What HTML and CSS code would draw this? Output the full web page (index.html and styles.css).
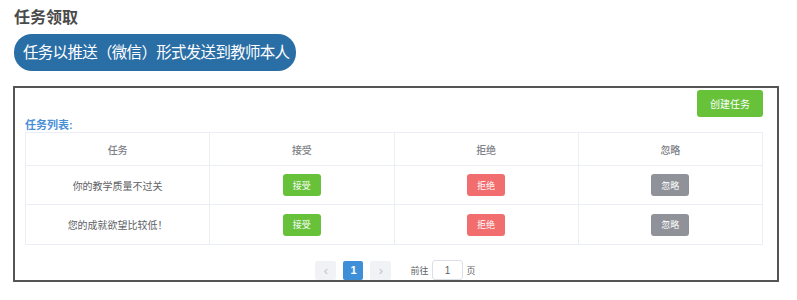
FILE: index.html
```html
<!DOCTYPE html>
<html lang="zh-CN">
<head>
  <meta charset="UTF-8">
  <title>任务领取</title>
  <link rel="stylesheet" href="styles.css">
</head>
<body>

  <div class="page">
    <h2 class="title">任务领取</h2>
    <div class="notice">任务以推送（微信）形式发送到教师本人</div>

    <div class="panel">
      <div class="toolbar">
        <button class="btn btn-create">创建任务</button>
      </div>
      <div class="list-label">任务列表:</div>

      <table class="task-table">
        <thead>
          <tr>
            <th>任务</th>
            <th>接受</th>
            <th>拒绝</th>
            <th>忽略</th>
          </tr>
        </thead>
        <tbody>
          <tr>
            <td>你的教学质量不过关</td>
            <td><button class="btn btn-sm btn-success">接受</button></td>
            <td><button class="btn btn-sm btn-danger">拒绝</button></td>
            <td><button class="btn btn-sm btn-info">忽略</button></td>
          </tr>
          <tr class="row-tall">
            <td>您的成就欲望比较低！</td>
            <td><button class="btn btn-sm btn-success">接受</button></td>
            <td><button class="btn btn-sm btn-danger">拒绝</button></td>
            <td><button class="btn btn-sm btn-info">忽略</button></td>
          </tr>
        </tbody>
      </table>

      <div class="pager">
        <button class="pg-btn pg-arrow">&lsaquo;</button>
        <button class="pg-btn pg-active">1</button>
        <button class="pg-btn pg-arrow">&rsaquo;</button>
        <span class="pg-jump">前往 <input class="pg-input" type="text" value="1"> 页</span>
      </div>
    </div>
  </div>

</body>
</html>
```

FILE: styles.css
```css
body {
  margin: 0;
  font-family: "Liberation Sans", "Noto Sans CJK SC", sans-serif;
  background: #fff;
  color: #606266;
}

.page {
  padding: 8px 0 0 14px;
}

.title {
  margin: 0;
  font-size: 16px;
  line-height: 20px;
  font-weight: bold;
  color: #4a4a4a;
}

.notice {
  display: inline-block;
  margin-top: 6px;
  height: 37px;
  line-height: 37px;
  padding: 0 7px 0 9px;
  border-radius: 18px;
  background: #2a6ea6;
  color: #fff;
  font-size: 15.5px;
  letter-spacing: -0.7px;
}

.panel {
  margin: 15px 0 0 -1px;
  width: 738px;
  height: 178px;
  border: 2px solid #555;
  padding: 2px 14px 12px 10px;
}

.toolbar {
  display: flex;
  justify-content: flex-end;
}

.btn {
  border: none;
  border-radius: 3px;
  color: #fff;
  font-family: inherit;
  cursor: pointer;
}

.btn-create {
  width: 66px;
  height: 27px;
  font-size: 10px;
  background: #67c23a;
}

.list-label {
  margin-top: 2px;
  font-size: 11px;
  line-height: 13px;
  font-weight: bold;
  color: #4a90d9;
}

.task-table {
  width: 100%;
  border-collapse: collapse;
  table-layout: fixed;
  font-size: 10px;
}

.task-table th,
.task-table td {
  border: 1px solid #ebeef5;
  text-align: center;
  padding: 0;
}

.task-table th {
  height: 32px;
  color: #7d8086;
  font-weight: 500;
}

.task-table td {
  height: 38px;
  color: #606266;
}

.task-table .row-tall td {
  height: 39px;
}

.btn-sm {
  width: 38px;
  height: 22px;
  font-size: 9px;
  vertical-align: middle;
}

.btn-success {
  background: #67c23a;
}

.btn-danger {
  background: #f26d6e;
}

.btn-info {
  background: #8f9299;
}

.pager {
  display: flex;
  justify-content: center;
  align-items: center;
  margin-top: 15px;
  padding-left: 3px;
  font-size: 9px;
  color: #606266;
}

.pg-btn {
  width: 21px;
  height: 19px;
  margin-right: 7px;
  border: none;
  border-radius: 2px;
  background: #f0f2f5;
  color: #c0c4cc;
  font-size: 13px;
  font-family: inherit;
  padding: 0;
  line-height: 19px;
}

.pg-active {
  width: 20px;
  background: #3f8fd8;
  color: #fff;
  font-size: 11px;
  font-weight: bold;
}

.pg-jump {
  margin-left: 12px;
}

.pg-input {
  width: 29px;
  height: 18px;
  margin: 0 1px;
  padding: 0;
  border: 1px solid #dcdfe6;
  border-radius: 3px;
  text-align: center;
  font-size: 10px;
  color: #606266;
  font-family: inherit;
}
```
